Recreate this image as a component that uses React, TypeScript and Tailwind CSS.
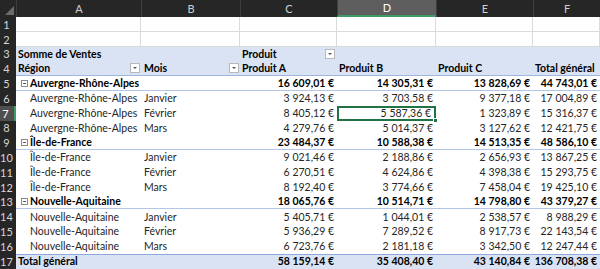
import React from "react";

type Row = {
  kind: "group" | "detail" | "total";
  region: string;
  mois?: string;
  values: string[];
};

const COLS = ["A", "B", "C", "D", "E", "F"];
const WIDTHS = ["w-[125px]", "w-[99px]", "w-[97px]", "w-[99px]", "w-[97px]", "w-[67px]"];

const rows: Row[] = [
  { kind: "group", region: "Auvergne-Rhône-Alpes", values: ["16 609,01 €", "14 305,31 €", "13 828,69 €", "44 743,01 €"] },
  { kind: "detail", region: "Auvergne-Rhône-Alpes", mois: "Janvier", values: ["3 924,13 €", "3 703,58 €", "9 377,18 €", "17 004,89 €"] },
  { kind: "detail", region: "Auvergne-Rhône-Alpes", mois: "Février", values: ["8 405,12 €", "5 587,36 €", "1 323,89 €", "15 316,37 €"] },
  { kind: "detail", region: "Auvergne-Rhône-Alpes", mois: "Mars", values: ["4 279,76 €", "5 014,37 €", "3 127,62 €", "12 421,75 €"] },
  { kind: "group", region: "Île-de-France", values: ["23 484,37 €", "10 588,38 €", "14 513,35 €", "48 586,10 €"] },
  { kind: "detail", region: "Île-de-France", mois: "Janvier", values: ["9 021,46 €", "2 188,86 €", "2 656,93 €", "13 867,25 €"] },
  { kind: "detail", region: "Île-de-France", mois: "Février", values: ["6 270,51 €", "4 624,86 €", "4 398,38 €", "15 293,75 €"] },
  { kind: "detail", region: "Île-de-France", mois: "Mars", values: ["8 192,40 €", "3 774,66 €", "7 458,04 €", "19 425,10 €"] },
  { kind: "group", region: "Nouvelle-Aquitaine", values: ["18 065,76 €", "10 514,71 €", "14 798,80 €", "43 379,27 €"] },
  { kind: "detail", region: "Nouvelle-Aquitaine", mois: "Janvier", values: ["5 405,71 €", "1 044,01 €", "2 538,57 €", "8 988,29 €"] },
  { kind: "detail", region: "Nouvelle-Aquitaine", mois: "Février", values: ["5 936,29 €", "7 289,52 €", "8 917,73 €", "22 143,54 €"] },
  { kind: "detail", region: "Nouvelle-Aquitaine", mois: "Mars", values: ["6 723,76 €", "2 181,18 €", "3 342,50 €", "12 247,44 €"] },
  { kind: "total", region: "Total général", values: ["58 159,14 €", "35 408,40 €", "43 140,84 €", "136 708,38 €"] },
];

const RowNum = ({ n, active }: { n: number; active?: boolean }) => (
  <div
    className={`w-[16px] shrink-0 h-full flex items-center justify-center pr-[3px] text-[11px] ${
      active ? "bg-[#4f4f4f] text-white border-r-2 border-[#3f9a63]" : "bg-[#262626] text-[#d6d6d6]"
    }`}
  >
    {n}
  </div>
);

const Dropdown = () => (
  <div className="w-[10px] h-[10px] bg-white border border-[#b8b8b8] flex items-center justify-center shrink-0">
    <svg width="6" height="4" viewBox="0 0 6 4">
      <path d="M1 1h4L3 3z" fill="#555" />
    </svg>
  </div>
);

const Minus = () => (
  <div className="w-[7px] h-[7px] border border-[#8a8a8a] bg-white flex items-center justify-center mr-[2px] shrink-0">
    <div className="w-[3px] h-px bg-[#555]" />
  </div>
);

const ROW_H = "h-[14.8px]";

export default function App() {
  return (
    <div
      className="w-[600px] h-[269px] overflow-hidden bg-white text-[10.5px] leading-none text-[#262626]"
      style={{ fontFamily: "Lato, 'Liberation Sans', sans-serif" }}
    >
      {/* column headers */}
      <div className="flex h-[17px] bg-[#262626] text-[#d0d0d0] text-[11px]">
        <div className="w-[16px] shrink-0 relative">
          <svg className="absolute right-[2px] bottom-[2px]" width="9" height="9" viewBox="0 0 9 9">
            <path d="M9 0V9H0z" fill="#6b6b6b" />
          </svg>
        </div>
        {COLS.map((c, i) => (
          <div
            key={c}
            className={`${WIDTHS[i]} shrink-0 flex items-center justify-center border-l border-[#3d3d3d] ${
              c === "D" ? "bg-[#5e5e5e] text-white border-b-2 border-b-[#3f9a63]" : ""
            }`}
          >
            {c}
          </div>
        ))}
      </div>

      {/* rows 1-2 empty */}
      {[1, 2].map((n) => (
        <div key={n} className={`flex ${ROW_H}`}>
          <RowNum n={n} />
          {COLS.map((c, i) => (
            <div key={c} className={`${WIDTHS[i]} shrink-0 border-r border-b border-[#dadada]`} />
          ))}
        </div>
      ))}

      {/* row 3 */}
      <div className={`flex ${ROW_H}`}>
        <RowNum n={3} />
        <div className="flex flex-1 bg-[#dae3f3] font-bold text-black">
          <div className="w-[125px] shrink-0 flex items-center pl-[2px]">Somme de Ventes</div>
          <div className="w-[99px] shrink-0" />
          <div className="w-[97px] shrink-0 flex items-center justify-between pl-[2px] pr-[2px]">
            <span>Produit</span>
            <Dropdown />
          </div>
        </div>
      </div>

      {/* row 4 */}
      <div className={`flex ${ROW_H}`}>
        <RowNum n={4} />
        <div className="flex flex-1 bg-[#dae3f3] font-bold text-black border-b border-[#9fb6e0]">
          <div className="w-[125px] shrink-0 flex items-center justify-between pl-[2px] pr-[1px]">
            <span>Région</span>
            <Dropdown />
          </div>
          <div className="w-[99px] shrink-0 flex items-center justify-between pl-[3px] pr-[1px]">
            <span>Mois</span>
            <Dropdown />
          </div>
          <div className="w-[97px] shrink-0 flex items-center pl-[2px]">Produit A</div>
          <div className="w-[99px] shrink-0 flex items-center pl-[2px]">Produit B</div>
          <div className="w-[97px] shrink-0 flex items-center pl-[2px]">Produit C</div>
          <div className="w-[67px] shrink-0 flex items-center pl-[2px] whitespace-nowrap">Total général</div>
        </div>
      </div>

      {rows.map((r, idx) => {
        const n = idx + 5;
        const group = r.kind === "group";
        const total = r.kind === "total";
        return (
          <div key={n} className={`flex ${ROW_H}`}>
            <RowNum n={n} active={n === 7} />
            <div
              className={`flex flex-1 ${group ? "font-bold text-black border-b border-[#b4c6e7]" : ""} ${
                total ? "font-bold text-black bg-[#dae3f3] border-t border-[#8ea9db]" : ""
              }`}
            >
              <div
                className={`w-[125px] shrink-0 flex items-center whitespace-nowrap ${
                  total ? "pl-[2px]" : group ? "pl-[5px]" : "pl-[14px]"
                }`}
              >
                {group && <Minus />}
                {r.region}
              </div>
              <div className="w-[99px] shrink-0 flex items-center pl-[3px]">{r.mois}</div>
              {r.values.map((v, i) => {
                const selected = n === 7 && i === 1;
                return (
                  <div
                    key={i}
                    className={`${WIDTHS[i + 2]} shrink-0 flex items-center justify-end whitespace-nowrap pr-[3px] relative ${
                      selected ? "border-2 border-[#217346]" : ""
                    }`}
                  >
                    {v}
                    {selected && (
                      <div className="absolute right-[-4px] bottom-[-4px] w-[5px] h-[5px] bg-[#217346] border border-white" />
                    )}
                  </div>
                );
              })}
            </div>
          </div>
        );
      })}
    </div>
  );
}
